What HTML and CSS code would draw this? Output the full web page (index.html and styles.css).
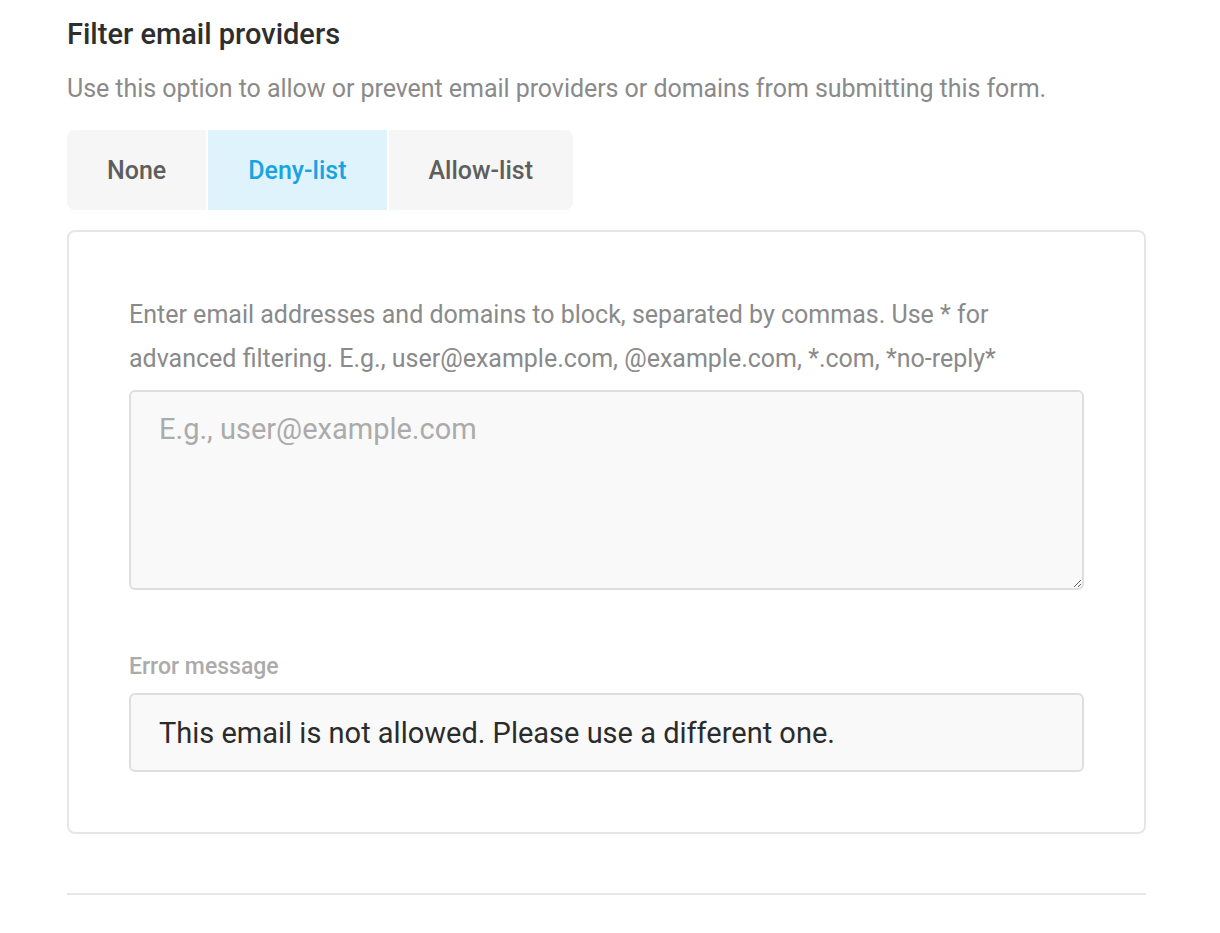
FILE: index.html
```html
<!DOCTYPE html>
<html lang="en">
<head>
<meta charset="utf-8">
<link rel="stylesheet" href="styles.css">
</head>
<body>
<main class="section">
  <h2 class="title">Filter email providers</h2>
  <p class="desc">Use this option to allow or prevent email providers or domains from submitting this form.</p>
  <div class="tabs">
    <button class="tab">None</button>
    <button class="tab active">Deny-list</button>
    <button class="tab">Allow-list</button>
  </div>
  <div class="panel">
    <p class="help">Enter email addresses and domains to block, separated by commas. Use * for advanced filtering. E.g., user@example.com, @example.com, *.com, *no-reply*</p>
    <textarea class="area" placeholder="E.g., user@example.com"></textarea>
    <label class="label">Error message</label>
    <input class="field" type="text" value="This email is not allowed. Please use a different one.">
  </div>
  <hr class="rule">
</main>
</body>
</html>
```
FILE: styles.css
```css
* { box-sizing: border-box; }
body {
  margin: 0;
  background: #fff;
  font-family: Roboto, "Liberation Sans", sans-serif;
}
.section {
  width: 1079px;
  margin-left: 67px;
  padding-top: 17px;
}
.title {
  margin: 0;
  font-size: 29px;
  line-height: 34px;
  font-weight: 500;
  color: #2e2e2e;
}
.desc {
  margin: 20px 0 0;
  font-size: 25px;
  line-height: 36px;
  letter-spacing: -0.05px;
  color: #8a8a8a;
}
.tabs {
  display: inline-flex;
  gap: 2px;
  margin-top: 23px;
  border-radius: 8px;
  overflow: hidden;
}
.tab {
  border: 0;
  height: 80px;
  padding: 0 40px;
  background: #f6f6f6;
  font-family: inherit;
  font-size: 25px;
  font-weight: 500;
  color: #5e5e5e;
}
.tab.active {
  background: #dff3fc;
  color: #1aa3e1;
}
.panel {
  margin-top: 20px;
  border: 2px solid #e6e6e6;
  border-radius: 8px;
  padding: 61px 60px 60px;
  display: flex;
  flex-direction: column;
}
.help {
  margin: 0;
  font-size: 25px;
  line-height: 44px;
  color: #8a8a8a;
}
.area {
  margin-top: 9px;
  height: 200px;
  border: 2px solid #dedede;
  border-radius: 6px;
  background: #f9f9f9;
  padding: 20px 28px;
  font-family: inherit;
  font-size: 29px;
  color: #333;
  resize: vertical;
}
.area::placeholder { color: #ababab; }
.label {
  margin-top: 63px;
  font-size: 23px;
  line-height: 28px;
  font-weight: 500;
  color: #ababab;
}
.field {
  margin-top: 12px;
  height: 79px;
  border: 2px solid #dedede;
  border-radius: 6px;
  background: #f9f9f9;
  padding: 0 28px;
  font-family: inherit;
  font-size: 29px;
  color: #2b2b2b;
}
.rule {
  margin: 59px 0 0;
  border: 0;
  border-top: 2px solid #e6e6e6;
}
```
